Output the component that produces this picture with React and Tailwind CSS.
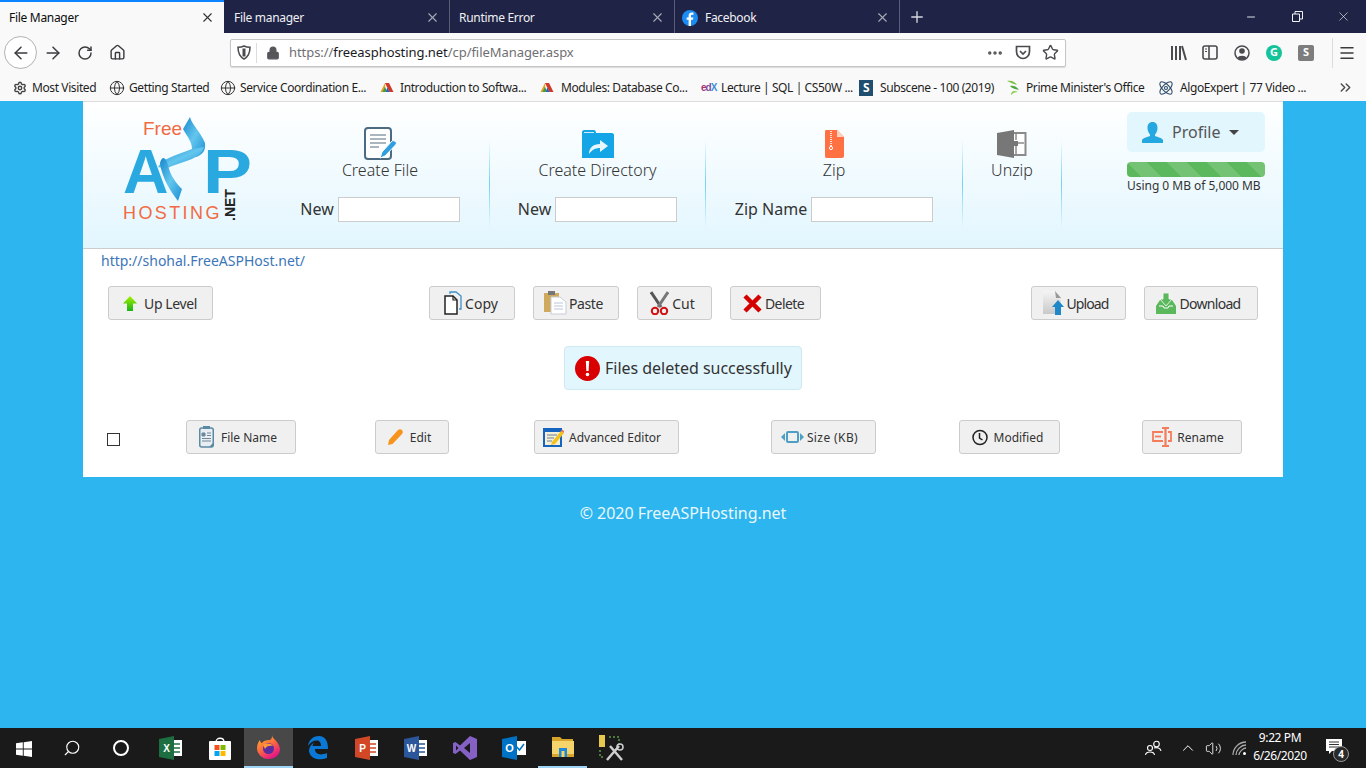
import React from "react";
import { ArrowLeft, ArrowRight, RotateCw, Home, Lock, Star, MoreHorizontal, Menu, Plus, X, Minus, ChevronsRight, ChevronUp, Search, Globe, Settings, Volume2 } from "lucide-react";

const tabs = [
  { title: "File manager", cls: "w-[226px] pl-[10px]" },
  { title: "Runtime Error", cls: "w-[225px] pl-[9px]" },
  { title: "Facebook", cls: "w-[225px] pl-[7px]", fb: true },
];

const FbIcon = () => (
  <svg width="16" height="16" viewBox="0 0 16 16" className="mr-[7px] shrink-0">
    <circle cx="8" cy="8" r="8" fill="#1b8cf2" />
    <path d="M9 16V9.8h2l.4-2.4H9V6c0-.8.3-1.2 1.2-1.2h1.3V2.7C11 2.6 10.500 2.500 9.800 2.500 8 2.500 6.600 3.600 6.600 5.700v1.700H4.600v2.400h2V16z" fill="#fff" />
  </svg>
);

const Triangle = () => (
  <svg width="14" height="12" viewBox="0 0 14 12" className="shrink-0">
    <path d="M5 1 L0.500 10 H5.500 Z" fill="#e5a020" />
    <path d="M5 1 L9 1 L13.500 10 H9.500 Z" fill="#d0382b" />
    <path d="M5.500 10 L7.500 5.500 L9.500 10 Z" fill="#2f5fb5" />
    <path d="M2.500 10 L5 5 L6.500 8 L5.500 10 Z" fill="#3c9a4e" />
  </svg>
);

const EdxIcon = () => (
  <span className="w-[14px] shrink-0 text-[10px] font-bold leading-none tracking-[-1px] font-['Liberation_Sans',sans-serif]">
    <span className="text-[#a6336e]">e</span><span className="text-[#7a4f9f]">d</span><span className="text-[#3f8fd6]">X</span>
  </span>
);

const SubIcon = () => (
  <span className="flex h-[16px] w-[14px] shrink-0 items-center justify-center bg-[#1f4e6e] text-[12px] font-bold leading-none text-white">S</span>
);

const LeafIcon = () => (
  <svg width="14" height="16" viewBox="0 0 14 16" className="shrink-0">
    <path d="M1 1 C6 0 9 2 11 5 C8 4 5 3 1 1Z" fill="#7cc242" />
    <path d="M4 6 C8 5 11 7 13 10 C9 9 7 9 4 6Z" fill="#4fa83d" />
    <path d="M5 15 C5 11 8 10 12 12 C9 12 7 13 5 15Z" fill="#8ccf4d" />
  </svg>
);

const AtomIcon = () => (
  <svg width="16" height="16" viewBox="0 0 16 16" className="shrink-0" fill="none" stroke="#2c4a6b" strokeWidth="1.100">
    <ellipse cx="8" cy="8" rx="3.500" ry="8" transform="rotate(45 8 8)" />
    <ellipse cx="8" cy="8" rx="3.500" ry="8" transform="rotate(-45 8 8)" />
    <circle cx="8" cy="8" r="1.500" />
  </svg>
);

const bookmarks = [
  { label: "Most Visited", icon: <Settings size={14} strokeWidth={2.400} className="text-[#444] shrink-0" />, cls: "w-[97px] pl-[13px] gap-[5px]" },
  { label: "Getting Started", icon: <Globe size={16} strokeWidth={1.500} className="text-[#333] shrink-0" />, cls: "w-[111px] pl-[12px] gap-[4px]" },
  { label: "Service Coordination E...", icon: <Globe size={16} strokeWidth={1.500} className="text-[#333] shrink-0" />, cls: "w-[160px] pl-[12px] gap-[4px]" },
  { label: "Introduction to Softwa...", icon: <Triangle />, cls: "w-[160px] pl-[12px] gap-[6px]" },
  { label: "Modules: Database Co...", icon: <Triangle />, cls: "w-[161px] pl-[12px] gap-[7px]" },
  { label: "Lecture | SQL | CS50W ...", icon: <EdxIcon />, cls: "w-[159px] pl-[12px] gap-[6px]" },
  { label: "Subscene - 100 (2019)", icon: <SubIcon />, cls: "w-[146px] pl-[11px] gap-[7px]" },
  { label: "Prime Minister's Office", icon: <LeafIcon />, cls: "w-[153px] pl-[12px] gap-[6px]" },
  { label: "AlgoExpert | 77 Video ...", icon: <AtomIcon />, cls: "w-[156px] pl-[11px] gap-[6px]" },
];

const TabBar = () => (
  <div className="flex h-[33px] shrink-0 items-stretch bg-[#1f2345] font-['Noto_Sans',sans-serif] text-[12px]">
    <div className="flex w-[224px] items-center border-t-2 border-[#0a84ff] bg-[#f9f9fa] pl-[9px] pr-[9px] text-[#0c0c0d]">
      <span className="flex-1 tracking-[-0.3px]">File Manager</span>
      <X size={15} strokeWidth={1.800} className="text-[#333]" />
    </div>
    {tabs.map((t) => (
      <div key={t.title} className={`flex items-center border-r border-[#5a5d75] pr-[9px] pt-[2px] text-[#f0f0f4] ${t.cls}`}>
        {t.fb && <FbIcon />}
        <span className="flex-1 tracking-[-0.3px]">{t.title}</span>
        <X size={15} strokeWidth={1.800} className="text-[#a9aab8]" />
      </div>
    ))}
    <div className="flex w-[34px] items-center justify-center text-[#d8d8e0]">
      <Plus size={18} strokeWidth={1.800} />
    </div>
    <div className="ml-auto flex items-center text-[#f4f4f8]">
      <div className="flex w-[46px] justify-center"><Minus size={12} strokeWidth={1.800} /></div>
      <div className="flex w-[46px] justify-center">
        <svg width="11" height="11" viewBox="0 0 11 11" fill="none" stroke="currentColor"><path d="M.5 3h7v7.500h-7zM3 3V.5h7.500V8H8" /></svg>
      </div>
      <div className="flex w-[46px] justify-center"><X size={15} strokeWidth={1} /></div>
    </div>
  </div>
);

const Toolbar = () => (
  <div className="flex h-[39px] shrink-0 items-center bg-[#f9f9fa] font-['Noto_Sans',sans-serif] text-[#3b3b3f]">
    <div className="ml-[4px] flex h-[33px] w-[33px] items-center justify-center rounded-full border border-[#b1b1b3] bg-white">
      <ArrowLeft size={20} strokeWidth={1.800} />
    </div>
    <div className="ml-[4px] flex w-[24px] justify-center"><ArrowRight size={20} strokeWidth={1.800} /></div>
    <div className="ml-[8px] flex w-[24px] justify-center"><RotateCw size={16} strokeWidth={2.200} /></div>
    <div className="ml-[8px] flex w-[24px] justify-center"><Home size={17} strokeWidth={2} /></div>
    <div className="ml-[101px] flex h-[28px] w-[836px] items-center rounded-[2px] border border-[#c5c5c7] bg-white shadow-[0_1px_1px_rgba(0,0,0,0.12)]">
      <div className="flex w-[25px] justify-center">
        <svg width="14" height="15" viewBox="0 0 14 15" fill="none" stroke="#4a4a4f" strokeWidth="1.500">
          <path d="M7 1 C9 2 11 2.300 13 2.300 C13 8 11 12 7 14 C3 12 1 8 1 2.300 C3 2.300 5 2 7 1Z" />
          <path d="M7 3.500 V11.500" strokeWidth="3" />
        </svg>
      </div>
      <div className="h-[20px] w-px bg-[#dcdcde]" />
      <Lock size={14} fill="currentColor" className="ml-[9px] text-[#55555a]" />
      <div className="ml-[9px] flex-1 text-[13px] tracking-[-0.06px] text-[#6f6f73]">
        https://<span className="text-[#1a1a1e]">freeasphosting.net</span>/cp/fileManager.aspx
      </div>
      <MoreHorizontal size={18} strokeWidth={2.600} className="text-[#55555a]" />
      <svg width="16" height="15" viewBox="0 0 16 15" fill="none" stroke="#4a4a4f" strokeWidth="1.700" className="ml-[11px]">
        <path d="M1.500 1.500 H14.500 V6.500 C14.500 10.500 11.500 13.500 8 13.500 C4.500 13.500 1.500 10.500 1.500 6.500Z" />
        <path d="M5 6 L8 9 L11 6" />
      </svg>
      <Star size={17} strokeWidth={2} className="ml-[11px] mr-[6px] text-[#4a4a4f]" />
    </div>
    <div className="ml-[104px] flex items-center">
      <svg width="17" height="16" viewBox="0 0 17 16" fill="none" stroke="#4a4a4f" strokeWidth="2" className="mr-[15px]"><path d="M2 1v14M6 1v14M10 1v14M12 1l4 14" /></svg>
      <svg width="16" height="15" viewBox="0 0 16 15" fill="none" stroke="#4a4a4f" strokeWidth="1.600" className="mr-[16px]"><rect x="1" y="1" width="14" height="13" rx="2" /><path d="M7 1v13" /><path d="M3 4h2M3 6.500h2" strokeWidth="1" /></svg>
      <svg width="16" height="16" viewBox="0 0 16 16" className="mr-[16px]"><circle cx="8" cy="8" r="7" fill="none" stroke="#4a4a4f" strokeWidth="1.500" /><circle cx="8" cy="6" r="2.800" fill="#4a4a4f" /><path d="M3.500 13 C4.500 10 11.500 10 12.500 13 C10 15 6 15 3.500 13Z" fill="#4a4a4f" /></svg>
      <div className="mr-[16px] flex h-[16px] w-[16px] items-center justify-center rounded-full bg-[#15c39a] text-[11px] font-bold text-white">G</div>
      <div className="flex h-[16px] w-[16px] items-center justify-center rounded-[2px] bg-[#7d7d7d] text-[11px] font-bold text-white">S</div>
    </div>
    <div className="ml-[18px] h-[30px] w-px bg-[#dcdcde]" />
    <Menu size={18} strokeWidth={2} className="ml-[5px] text-[#3b3b3f]" />
  </div>
);

const BookmarkBar = () => (
  <div className="flex h-[29px] shrink-0 items-center bg-[#f9f9fa] pt-[2px] font-['Noto_Sans',sans-serif] text-[12px] tracking-[-0.4px] text-[#1f1f23]">
    {bookmarks.map((b) => (
      <div key={b.label} className={`flex shrink-0 items-center ${b.cls}`}>
        {b.icon}
        <span className="whitespace-nowrap">{b.label}</span>
      </div>
    ))}
    <ChevronsRight size={17} strokeWidth={2} className="ml-auto mr-[12px] text-[#4a4a4f]" />
  </div>
);

const Logo = () => (
  <svg width="170" height="125" viewBox="0 0 170 125" className="shrink-0">
    <defs>
      <linearGradient id="rib" x1="0" y1="0" x2="1" y2="1">
        <stop offset="0" stopColor="#1787cc" />
        <stop offset="0.500" stopColor="#63c6ee" />
        <stop offset="1" stopColor="#1c8fd4" />
      </linearGradient>
    </defs>
    <text x="43" y="30" fontFamily="Liberation Sans, sans-serif" fontSize="19" fill="#f26a3f">Free</text>
    <text x="23" y="88" fontFamily="Liberation Sans, sans-serif" fontWeight="bold" fontSize="63" fill="#29a9e0">A</text>
    <text x="103" y="88" textLength="49" lengthAdjust="spacingAndGlyphs" fontFamily="Liberation Sans, sans-serif" fontWeight="bold" fontSize="63" fill="#29a9e0">P</text>
    <path d="M90 12 C92 20 100 26 105 38 C106 46 102 50 96 52 L92 44 C92 36 86 30 83 24 Z" fill="url(#rib)" />
    <path d="M104 42 C100 56 80 56 66 64 L58 62 C62 54 76 50 92 44Z" fill="url(#rib)" />
    <path d="M60 58 C62 50 66 52 68 60 C70 70 76 78 82 84 L78 96 C72 88 62 74 60 58Z" fill="url(#rib)" />
    <text x="23" y="114" fontFamily="Liberation Sans, sans-serif" fontSize="18" letterSpacing="2.400" fill="#f26a3f">HOSTING</text>
    <text transform="translate(135 116) rotate(-90)" fontFamily="Liberation Sans, sans-serif" fontWeight="bold" fontSize="14" fill="#222">.NET</text>
  </svg>
);

const FileIcon = () => (
  <svg width="33" height="33" viewBox="0 0 33 33">
    <rect x="1" y="1" width="26" height="31" rx="3" fill="#fff" stroke="#4d6b80" strokeWidth="2" />
    <path d="M6 8h16M6 12h16M6 16h16M6 20h9" stroke="#a9b6bf" strokeWidth="1.800" />
    <path d="M16 31 L18 25 L28 14 C29 13 31 14 32 15 C33 16 32 17 31.500 18 L21 29Z" fill="#2f9fe0" stroke="#fff" strokeWidth="1" />
  </svg>
);

const FolderIcon = () => (
  <svg width="32" height="28" viewBox="0 0 32 28">
    <path d="M0 2 C0 1 1 0 2 0 H12 C13 0 14 1 14 3 H30 C31 3 32 4 32 5 V28 H0Z" fill="#14a5e6" />
    <path d="M2 2.500 H12" stroke="#fff" strokeWidth="0.800" />
    <path d="M7 24 C7 18 11 14 18 14 V10 L26 16 L18 22 V18 C13 18 10 20 7 24Z" fill="#fff" opacity="0.9" />
  </svg>
);

const ZipIcon = () => (
  <svg width="19" height="28" viewBox="0 0 19 28">
    <path d="M1.500 0 H12 L19 7 V26 C19 27 18 28 17 28 H1.500 C.500 28 0 27 0 26 V1.500 C0 .500 .500 0 1.500 0Z" fill="#ff7043" />
    <path d="M12 0 L19 7 H12Z" fill="#ffd0bd" />
    <path d="M6 1v15" stroke="#fff" strokeWidth="1.500" strokeDasharray="1 1" />
    <circle cx="6" cy="18" r="1.600" fill="none" stroke="#fff" strokeWidth="1" />
  </svg>
);

const UnzipIcon = () => (
  <svg width="30" height="28" viewBox="0 0 30 28">
    <path d="M14 3 H28.500 V25 H14" fill="#fff" stroke="#8a8a8a" strokeWidth="2" />
    <path d="M19 13h8M19 3v7M19 16v9" stroke="#8a8a8a" strokeWidth="1.500" />
    <path d="M0 3 L17 0 V28 L0 25Z" fill="#777" />
    <rect x="15" y="11" width="6" height="5" fill="#777" />
  </svg>
);

const Sep = () => (
  <div className="mt-[38px] h-[88px] w-px shrink-0 self-start bg-gradient-to-b from-transparent via-[#6fd2f5] to-transparent" />
);

const Field = ({ label }) => (
  <div className="mt-[16px] flex items-center">
    <span className="mr-[4px] text-[16px] leading-[25px] text-[#333]">{label}</span>
    <input readOnly className="h-[25px] w-[122px] border border-[#ccc] bg-white" />
  </div>
);

const HeaderCol = ({ icon, label, field, cls }) => (
  <div className={`flex shrink-0 flex-col items-center pt-[25px] ${cls}`}>
    <div className="flex h-[33px] items-center">{icon}</div>
    <div className="-mt-[1px] text-[16px] font-light leading-[22px] text-[#333]">{label}</div>
    {field && <Field label={field} />}
  </div>
);

const Header = () => (
  <div className="flex h-[147px] shrink-0 border-b border-[#ccc] bg-gradient-to-b from-white to-[#e2f6fe]">
    <div className="ml-[17px] mt-[3px] w-[171px] shrink-0"><Logo /></div>
    <HeaderCol icon={<FileIcon />} label="Create File" field="New" cls="w-[218px]" />
    <Sep />
    <HeaderCol icon={<FolderIcon />} label="Create Directory" field="New" cls="w-[215px]" />
    <Sep />
    <HeaderCol icon={<ZipIcon />} label="Zip" field="Zip Name" cls="w-[256px]" />
    <Sep />
    <HeaderCol icon={<UnzipIcon />} label="Unzip" cls="w-[98px]" />
    <Sep />
    <div className="ml-[65px] mt-[10px] w-[138px] shrink-0">
      <div className="flex h-[40px] items-center rounded-[5px] bg-[#e2f6fe] pl-[15px]">
        <svg width="21" height="21" viewBox="0 0 21 21" className="shrink-0">
          <path d="M10.500 0 C14 0 15.500 2.500 15.500 6 C15.500 9 14 11.500 13 12.500 V14 C16 15 20 16 21 18 V21 H0 V18 C1 16 5 15 8 14 V12.500 C7 11.500 5.500 9 5.500 6 C5.500 2.500 7 0 10.500 0Z" fill="#25a7e0" />
        </svg>
        <span className="ml-[9px] text-[16px] text-[#555]">Profile</span>
        <span className="ml-[9px] h-0 w-0 border-x-[5px] border-t-[5px] border-x-transparent border-t-[#444]" />
      </div>
      <div className="mt-[10px] h-[15px] rounded-[4px] bg-[#5cb85c] bg-[linear-gradient(45deg,rgba(255,255,255,0.15)_25%,transparent_25%,transparent_50%,rgba(255,255,255,0.15)_50%,rgba(255,255,255,0.15)_75%,transparent_75%,transparent)] bg-[length:40px_40px]" />
      <div className="whitespace-nowrap text-[12px] leading-[18px] tracking-[-0.03px] text-[#333]">Using 0 MB of 5,000 MB</div>
    </div>
  </div>
);

const icons = {
  up: (
    <svg width="14" height="15" viewBox="0 0 14 15">
      <defs><linearGradient id="upg" x1="0" y1="0" x2="0" y2="1"><stop offset="0" stopColor="#a6f000" /><stop offset="1" stopColor="#18b418" /></linearGradient></defs>
      <path d="M7 0 L14 7.500 H10 V15 H4 V7.500 H0Z" fill="url(#upg)" />
    </svg>
  ),
  copy: (
    <svg width="18" height="24" viewBox="0 0 18 24" fill="none">
      <path d="M6 3 V1 H12 L17 5 V18 H15" stroke="#3f8fc9" strokeWidth="1.300" />
      <path d="M1 5 H9 L13 9 V23 H1Z" fill="#fff" stroke="#222" strokeWidth="1.500" />
      <path d="M9 5 V9 H13" stroke="#222" strokeWidth="1.200" />
    </svg>
  ),
  paste: (
    <svg width="23" height="24" viewBox="0 0 23 24">
      <rect x="0" y="2" width="15" height="19" fill="#cfa95e" />
      <rect x="4" y="0" width="7" height="4" fill="#777" />
      <path d="M7 6 H16 L22 11 V23 H7Z" fill="#fff" stroke="#c6ced6" strokeWidth="1" />
      <path d="M10 12h9M10 15h9M10 18h9" stroke="#b8c6d6" strokeWidth="1" />
    </svg>
  ),
  cut: (
    <svg width="19" height="24" viewBox="0 0 19 24" fill="none">
      <path d="M1 1 L11 16" stroke="#555" strokeWidth="3" />
      <path d="M18 1 L8 16" stroke="#777" strokeWidth="3" />
      <circle cx="5" cy="20" r="3.200" stroke="#d01010" strokeWidth="2" />
      <circle cx="14" cy="20" r="3.200" stroke="#d01010" strokeWidth="2" />
    </svg>
  ),
  del: (
    <svg width="19" height="19" viewBox="0 0 19 19"><path d="M2 2 L17 17 M17 2 L2 17" stroke="#d40000" strokeWidth="4.500" /></svg>
  ),
  upload: (
    <svg width="22" height="24" viewBox="0 0 22 24">
      <defs><linearGradient id="ug" x1="0" y1="0" x2="0" y2="1"><stop offset="0" stopColor="#f4f4f4" /><stop offset="1" stopColor="#c9c9c9" /></linearGradient></defs>
      <path d="M0 0 H12 L18 7 V23 H0Z" fill="url(#ug)" />
      <path d="M12 0 L18 7 H13Z" fill="#999" />
      <path d="M15 9 L21 16 H18 V24 H12 V16 H9Z" fill="#1e88c9" />
    </svg>
  ),
  download: (
    <svg width="20" height="21" viewBox="0 0 20 21">
      <path d="M0 13 L4 7 H16 L20 13 V21 H0Z" fill="#5cb85c" />
      <path d="M3 13 H7 L8 15 H12 L13 13 H17" fill="none" stroke="#fff" strokeWidth="1" />
      <path d="M7 0 H13 V6 H16 L10 13 L4 6 H7Z" fill="#5cb85c" stroke="#fff" strokeWidth="0.800" />
    </svg>
  ),
  list: (
    <svg width="15" height="22" viewBox="0 0 15 22">
      <rect x="0.750" y="2" width="13.500" height="19" rx="2" fill="#e8eef2" stroke="#5b8aa3" strokeWidth="1.500" />
      <rect x="4" y="0" width="7" height="3" fill="#5b8aa3" />
      <path d="M3 7h3v3H3zM8 7h4M8 9.500h4M3 12.500h9M3 15h9" stroke="#6f8797" strokeWidth="1" fill="#6f8797" />
      <path d="M10 21 L14 17 V21Z" fill="#5b8aa3" />
    </svg>
  ),
  edit: (
    <svg width="15" height="16" viewBox="0 0 15 16"><path d="M0 16 L1 11 L10 1 C11 0 13 0 14 1 C15 2 15 4 14 5 L4.500 15Z" fill="#f7941d" /></svg>
  ),
  adv: (
    <svg width="21" height="20" viewBox="0 0 21 20">
      <rect x="0" y="1" width="19" height="19" fill="#1565c0" />
      <rect x="2" y="5" width="15" height="13" fill="#f5efd8" />
      <path d="M4 8h10M4 11h7M4 14h5" stroke="#6a7f99" strokeWidth="1" />
      <path d="M9 15 L18 4 L21 6 L12 17 L8 18Z" fill="#f2c21a" />
      <path d="M18 4 L19 2.500 L21 4 L21 6Z" fill="#ee6f5a" />
    </svg>
  ),
  size: (
    <svg width="23" height="14" viewBox="0 0 23 14">
      <path d="M0 7 L4 3 V11Z M23 7 L19 3 V11Z" fill="#4f9fc4" />
      <rect x="6" y="2" width="11" height="10" rx="1" fill="none" stroke="#4f9fc4" strokeWidth="2" />
    </svg>
  ),
  clock: (
    <svg width="16" height="17" viewBox="0 0 16 17" fill="none" stroke="#222" strokeWidth="1.500"><circle cx="8" cy="8.500" r="7" /><path d="M7.500 4v5l3 2" /></svg>
  ),
  rename: (
    <svg width="20" height="20" viewBox="0 0 20 20" fill="none" stroke="#f47c5a" strokeWidth="1.800">
      <path d="M11 5 H1 V14 H11M16 5 H19 V14 H16" />
      <path d="M3 9.500h6" />
      <path d="M10 1 H17 M13.500 1 V19 M10 19 H17" strokeWidth="2.200" />
    </svg>
  ),
};

const Btn = ({ icon, label, cls, small }) => (
  <button className={`flex h-[34px] shrink-0 items-center justify-center rounded-[3px] border border-[#ccc] bg-[#f0f0f0] text-[#333] ${small ? "text-[12px]" : "text-[14px]"} ${cls}`}>
    <span className="flex shrink-0 items-center">{icon}</span>
    <span className={`whitespace-nowrap ${small ? "pt-[1px]" : ""}`}>{label}</span>
  </button>
);

const ActionRow = () => (
  <div className="mt-[15px] flex px-[25px]">
    <Btn icon={icons.up} label="Up Level" cls="w-[105px] gap-[7px] pr-[1px] tracking-[-0.4px]" />
    <div className="ml-[216px] flex gap-[18px]">
      <Btn icon={icons.copy} label="Copy" cls="w-[86px] gap-[3px] pr-[2px]" />
      <Btn icon={icons.paste} label="Paste" cls="w-[86px] gap-[2px] pr-[5px] tracking-[-0.4px]" />
      <Btn icon={icons.cut} label="Cut" cls="w-[75px] gap-[3px] pr-[4px]" />
      <Btn icon={icons.del} label="Delete" cls="w-[91px] gap-[3px] pr-[4px] tracking-[-0.6px]" />
    </div>
    <div className="ml-auto flex gap-[18px]">
      <Btn icon={icons.upload} label="Upload" cls="w-[95px] gap-[2px] pr-[6px] tracking-[-0.9px]" />
      <Btn icon={icons.download} label="Download" cls="w-[114px] gap-[3px] pr-[5px] tracking-[-0.7px]" />
    </div>
  </div>
);

const Alert = () => (
  <div className="mt-[26px] flex justify-center">
    <div className="flex h-[44px] w-[238px] items-center rounded-[4px] border border-[#cfe8f2] bg-[#e2f6fe] pl-[10px]">
      <svg width="25" height="25" viewBox="0 0 25 25" className="shrink-0">
        <circle cx="12.500" cy="12.500" r="12.500" fill="#d80000" />
        <path d="M10.800 5 H14.200 L13.600 15 H11.400Z" fill="#fff" />
        <circle cx="12.500" cy="18.500" r="1.800" fill="#fff" />
      </svg>
      <span className="ml-[5px] whitespace-nowrap text-[16px] tracking-[-0.02px] text-[#333]">Files deleted successfully</span>
    </div>
  </div>
);

const HeadRow = () => (
  <div className="mt-[30px] flex items-center pl-[24px]">
    <span className="mt-[5px] h-[13px] w-[13px] shrink-0 border border-[#333] bg-white" />
    <Btn small icon={icons.list} label="File Name" cls="ml-[66px] w-[110px] gap-[7px] pr-[6px]" />
    <Btn small icon={icons.edit} label="Edit" cls="ml-[79px] w-[74px] gap-[7px] pr-[5px]" />
    <Btn small icon={icons.adv} label="Advanced Editor" cls="ml-[85px] w-[145px] gap-[5px] pr-[9px]" />
    <Btn small icon={icons.size} label="Size (KB)" cls="ml-[92px] w-[105px] gap-[3px] pr-[8px] tracking-[0.4px]" />
    <Btn small icon={icons.clock} label="Modified" cls="ml-[83px] w-[101px] gap-[6px] pr-[4px]" />
    <Btn small icon={icons.rename} label="Rename" cls="ml-[82px] w-[100px] gap-[5px] pr-[8px]" />
  </div>
);

const Panel = () => (
  <div className="mx-auto h-[376px] w-[1200px] border-t border-[#dcdcdc] bg-white font-['Noto_Sans',sans-serif]">
    <Header />
    <div className="pl-[18px] pt-[2px] text-[14px] leading-[20px] text-[#3c76b8]">http://shohal.FreeASPHost.net/</div>
    <ActionRow />
    <Alert />
    <HeadRow />
  </div>
);

const WinLogo = () => (
  <svg width="16" height="16" viewBox="0 0 16 16" fill="#fff"><path d="M0 2.300 L6.800 1.300 V7.500 H0Z M7.700 1.200 L16 0 V7.500 H7.700Z M0 8.500 H6.800 V14.700 L0 13.700Z M7.700 8.500 H16 V16 L7.700 14.800Z" /></svg>
);

const OfficeIcon = ({ letter, main }) => (
  <svg width="23" height="24" viewBox="0 0 23 24">
    <rect x="9" y="4" width="14" height="16" fill="#fff" />
    <path d="M13 8h8M13 12h8M13 16h8" stroke={main} strokeWidth="1.500" />
    <path d="M0 3 L15 0 V24 L0 21Z" fill={main} />
    <text x="7.500" y="16" textAnchor="middle" fontFamily="Liberation Sans, sans-serif" fontWeight="bold" fontSize="10" fill="#fff">{letter}</text>
  </svg>
);

const task = [
  { key: "excel", el: <OfficeIcon letter="X" main="#1d6f42" /> },
  { key: "store", el: (
    <svg width="22" height="24" viewBox="0 0 22 24"><path d="M7 6 C7 1 15 1 15 6" fill="none" stroke="#fff" strokeWidth="1.300" /><rect y="5" width="22" height="19" rx="1" fill="#fff" /><rect x="5.500" y="9" width="5" height="5" fill="#f25022" /><rect x="11.500" y="9" width="5" height="5" fill="#7fba00" /><rect x="5.500" y="15" width="5" height="5" fill="#00a4ef" /><rect x="11.500" y="15" width="5" height="5" fill="#ffb900" /></svg>
  ) },
  { key: "firefox", active: true, el: (
    <svg width="23" height="24" viewBox="0 0 23 24">
      <defs><linearGradient id="ff" x1="0" y1="0" x2="0.600" y2="1"><stop offset="0" stopColor="#ffbd2e" /><stop offset="0.500" stopColor="#ff7139" /><stop offset="1" stopColor="#e31587" /></linearGradient></defs>
      <path d="M15 0 C15 4 22 6 23 14 C23 20 18 24 11.500 24 C5 24 0 19 0 13 C0 9 2 6 3 5 C3 7 4 8 5 8 C7 5 11 5 13 5 C15 4 15 2 15 0Z" fill="url(#ff)" />
      <circle cx="11.500" cy="13.500" r="5.500" fill="#5b2ca0" />
      <path d="M6 10 C9 8 14 8 16 11 C13 10 9 11 8 14Z" fill="#ff9a3c" />
    </svg>
  ) },
  { key: "edge", el: (
    <svg width="21" height="24" viewBox="0 0 21 24" fill="#0a78d4">
      <path d="M1 10 C2 3 7 0 12 0 C18 0 21 5 21 13 H8 C8 18 13 20 20 17 V22 C12 25 3 23 2 15 C2 12 4 8 7 7 C6 8 5.500 9 5.500 10 H14 C14 6 12 4.500 10 4.500 C6 4.500 3 6.500 1 10Z" />
    </svg>
  ) },
  { key: "ppt", el: <OfficeIcon letter="P" main="#d24726" /> },
  { key: "word", el: <OfficeIcon letter="W" main="#2b579a" /> },
  { key: "vs", el: (
    <svg width="24" height="24" viewBox="0 0 24 24"><path d="M17 0 L24 3 V21 L17 24 L7 14.500 L2.500 18 L0 17 V7 L2.500 6 L7 9.500Z M17 7 L11 12 L17 17Z M3 9.500 V14.500 L5.500 12Z" fill="#8661c5" fillRule="evenodd" /></svg>
  ) },
  { key: "outlook", el: (
    <svg width="24" height="24" viewBox="0 0 24 24">
      <rect x="11" y="5" width="13" height="14" fill="#fff" />
      <path d="M13 9 L17.500 14 L22 8" fill="none" stroke="#0072c6" strokeWidth="1.500" />
      <path d="M0 3 L15 0 V24 L0 21Z" fill="#0072c6" />
      <text x="7.500" y="16" textAnchor="middle" fontFamily="Liberation Sans, sans-serif" fontWeight="bold" fontSize="11" fill="#fff">O</text>
    </svg>
  ) },
  { key: "explorer", under: true, el: (
    <svg width="22" height="22" viewBox="0 0 22 22"><path d="M0 1 H8 L10 3 H21 V6 H0Z" fill="#d9a42a" /><rect y="5" width="22" height="16" fill="#f5d56b" /><rect y="18" width="22" height="3" fill="#d9a42a" /><rect x="7" y="12" width="8" height="9" fill="#1e88d9" /><rect x="9.500" y="15" width="3" height="6" fill="#f5d56b" /></svg>
  ) },
  { key: "tools", el: (
    <svg width="26" height="26" viewBox="0 0 26 26" fill="none">
      <rect x="0" y="0" width="6" height="12" fill="#e6c84f" />
      <path d="M10 2h10v8M1 15v7h3" stroke="#5c9a4a" strokeWidth="1.500" strokeDasharray="2 2" />
      <path d="M8 25 L20 11 M11 11 L23 25" stroke="#cfcfcf" strokeWidth="2.500" />
      <circle cx="21" cy="12" r="3" stroke="#cfcfcf" strokeWidth="1.500" />
    </svg>
  ) },
];

const Taskbar = () => (
  <div className="flex h-[40px] shrink-0 items-stretch bg-[#1a1a1a] font-['Noto_Sans',sans-serif] text-white">
    <div className="flex w-[47px] items-center justify-center pt-[1px]"><WinLogo /></div>
    <div className="flex w-[49px] items-center justify-center"><Search size={18} strokeWidth={1.500} className="-scale-x-100" /></div>
    <div className="flex w-[49px] items-center justify-center"><span className="h-[16px] w-[16px] rounded-full border-2 border-white" /></div>
    <div className="w-[1px]" />
    {task.map((t) => (
      <div key={t.key} className={`flex w-[49px] items-center justify-center ${t.active ? "border-b-2 border-[#9fd4f5] bg-[#484848]" : ""} ${t.under ? "border-b-2 border-[#9fd4f5]" : ""}`}>
        {t.el}
      </div>
    ))}
    <div className="ml-auto flex items-center">
      <svg width="17" height="16" viewBox="0 0 17 16" fill="none" stroke="#fff" strokeWidth="1.100" className="mr-[17px]"><circle cx="5" cy="8" r="2.500" /><path d="M.5 15 C1 11 9 11 9.500 15" /><circle cx="11.500" cy="4" r="2.800" /><path d="M9 8 C12 7 15.500 8 16 11" /></svg>
      <ChevronUp size={18} strokeWidth={1.300} className="mr-[8px]" />
      <Volume2 size={17} strokeWidth={1.200} className="mr-[10px]" />
      <svg width="15" height="15" viewBox="0 0 15 15" fill="none" stroke="#aaa" strokeWidth="1.300" className="mr-[3px]"><path d="M1 14 C1 7 7 1 14 1M4 14 C4 9 9 4 14 4M7 14 C7 11 11 7 14 7" /><circle cx="12.500" cy="12.500" r="1.500" fill="#fff" stroke="none" /></svg>
      <div className="w-[60px] -translate-y-px text-center text-[12px] leading-[18px] tracking-[-0.4px]">
        <div>9:22 PM</div>
        <div>6/26/2020</div>
      </div>
      <div className="relative ml-[16px] mr-[24px] h-[13px] w-[16px] -translate-y-[3px]">
        <svg width="16" height="15" viewBox="0 0 16 15"><path d="M0 0 H16 V12 H6 L3 15 V12 H0Z" fill="#fff" /><path d="M3 3h10M3 5.500h10M3 8h10" stroke="#333" strokeWidth="1" /></svg>
        <span className="absolute left-[7px] top-[7px] flex h-[16px] w-[16px] items-center justify-center rounded-full border border-[#999] bg-[#2a2a2a] text-[10px] font-bold leading-none">4</span>
      </div>
    </div>
  </div>
);

export default function App() {
  return (
    <div className="flex h-screen flex-col overflow-hidden bg-[#2cb5ee]">
      <TabBar />
      <Toolbar />
      <BookmarkBar />
      <div className="min-h-0 flex-1">
        <Panel />
        <div className="mt-[25px] text-center font-['Noto_Sans',sans-serif] text-[16px] leading-[22px] tracking-[-0.03px] text-[#e8f7fe]">© 2020 FreeASPHosting.net</div>
      </div>
      <Taskbar />
    </div>
  );
}
